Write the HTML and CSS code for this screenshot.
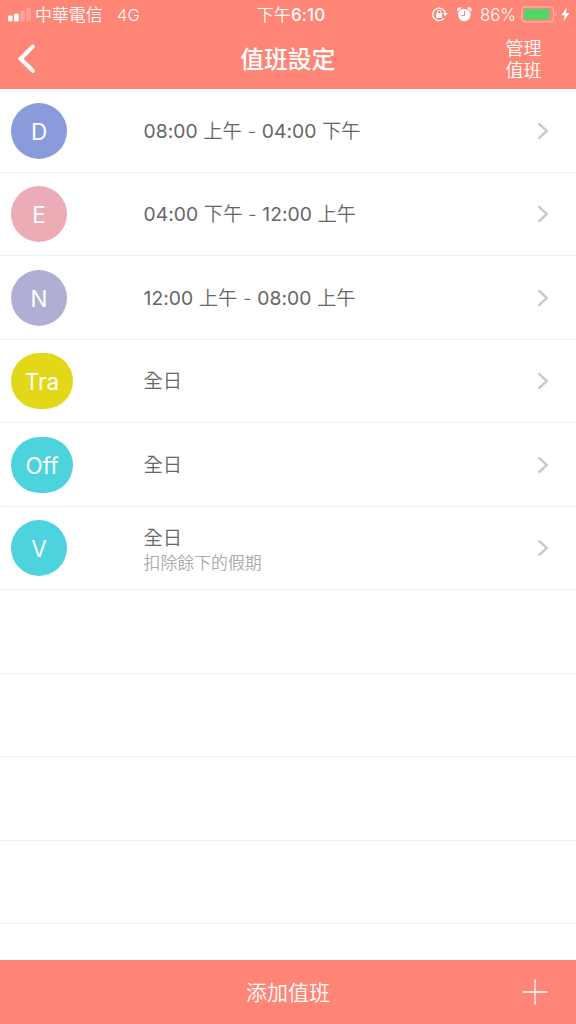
FILE: index.html
```html
<!DOCTYPE html>
<html lang="zh-Hant">
<head>
<meta charset="utf-8">
<title>值班設定</title>
<link rel="stylesheet" href="styles.css">
</head>
<body>
<div class="app">
  <header class="header">
    <div class="status">
      <div class="status-left">
        <svg class="signal" width="24" height="14" viewBox="0 0 24 14" fill="#fff"><rect x="0" y="7.5" width="4.6" height="6" rx="1.2"/><rect x="6.1" y="5.5" width="4.6" height="8" rx="1.2"/><rect x="12.2" y="2.7" width="4.6" height="10.8" rx="1.2" opacity=".25"/><rect x="18.2" y="0" width="4.6" height="13.5" rx="1.2" opacity=".25"/></svg>
        <span class="carrier">中華電信</span>
        <span class="network">4G</span>
      </div>
      <div class="clock">下午<b class="time">6:10</b></div>
      <div class="status-right">
        <svg class="lock" width="16" height="15" viewBox="0 0 16 15" fill="none" stroke="#fff"><path d="M12 11.3A6.3 6.3 0 1 1 13.3 6.6" stroke-width="1.3"/><path d="M10.6 5.9h5.2l-2.6 3.4z" fill="#fff" stroke="none"/><rect x="4.2" y="6.3" width="5.8" height="4.6" rx=".5" fill="#fff" stroke="none"/><path d="M5.4 6.5V5a1.7 1.7 0 0 1 3.4 0v1.5" stroke-width="1.1"/></svg>
        <svg class="alarm" width="15" height="15" viewBox="0 0 15 15" fill="#fff"><circle cx="7.3" cy="8" r="6.2"/><path d="M.6 4.7A2.7 2.7 0 0 1 4.5 1zM14 4.7A2.7 2.7 0 0 0 10.1 1z"/><path d="M7.5 4v4.5H4.4" fill="none" stroke="#ff8576" stroke-width="1"/></svg>
        <span class="percent">86%</span>
        <svg class="battery" width="37" height="17" viewBox="0 0 37 17"><rect x=".8" y=".8" width="31.7" height="15" rx="3.2" fill="none" stroke="#fff" stroke-opacity=".4" stroke-width="1.3"/><path d="M34.2 5.8a3 3 0 0 1 0 5z" fill="#fff" opacity=".4"/><rect x="3" y="3" width="25" height="10.6" rx="1" fill="#4cd964"/></svg>
        <svg class="bolt" width="9" height="15" viewBox="0 0 9 15"><path d="M5.8.5L.2 8.3h3.4L2.5 14.3 8.6 6H5z" fill="#fff"/></svg>
      </div>
    </div>
    <nav class="nav">
      <svg class="back" width="20" height="32" viewBox="0 0 20 32"><path d="M16.8 3.6L4.6 15.8l12.2 12" fill="none" stroke="#fff" stroke-width="4.1" stroke-linecap="round" stroke-linejoin="miter"/></svg>
      <h1 class="title">值班設定</h1>
      <div class="manage">管理<br>值班</div>
    </nav>
  </header>
  <main class="list">
    <div class="row"><span class="badge blue">D</span><div class="info"><p class="hours"><time>08:00</time> 上午 - <time>04:00</time> 下午</p></div><svg class="chevron" viewBox="0 0 12 18"><path d="M1.6 1.3L9.7 9l-8.1 7.7"/></svg></div>
    <div class="row"><span class="badge pink">E</span><div class="info"><p class="hours"><time>04:00</time> 下午 - <time>12:00</time> 上午</p></div><svg class="chevron" viewBox="0 0 12 18"><path d="M1.6 1.3L9.7 9l-8.1 7.7"/></svg></div>
    <div class="row"><span class="badge violet">N</span><div class="info"><p class="hours"><time>12:00</time> 上午 - <time>08:00</time> 上午</p></div><svg class="chevron" viewBox="0 0 12 18"><path d="M1.6 1.3L9.7 9l-8.1 7.7"/></svg></div>
    <div class="row"><span class="badge wide yellow">Tra</span><div class="info"><p class="hours">全日</p></div><svg class="chevron" viewBox="0 0 12 18"><path d="M1.6 1.3L9.7 9l-8.1 7.7"/></svg></div>
    <div class="row"><span class="badge wide cyan">Off</span><div class="info"><p class="hours">全日</p></div><svg class="chevron" viewBox="0 0 12 18"><path d="M1.6 1.3L9.7 9l-8.1 7.7"/></svg></div>
    <div class="row"><span class="badge cyan">V</span><div class="info double"><p class="hours">全日</p><p class="note">扣除餘下的假期</p></div><svg class="chevron" viewBox="0 0 12 18"><path d="M1.6 1.3L9.7 9l-8.1 7.7"/></svg></div>
    <div class="row"></div>
    <div class="row"></div>
    <div class="row"></div>
    <div class="row"></div>
  </main>
  <footer class="footer">
    <span class="add">添加值班</span>
    <svg class="plus" width="26" height="26" viewBox="0 0 26 26"><path d="M13 .5v25M.5 13h25" stroke="#fff" stroke-width="1.3"/></svg>
  </footer>
</div>
</body>
</html>
```
FILE: styles.css
```css
* { box-sizing: border-box; }
body {
  margin: 0;
  background: #fff;
  font-family: Inter, "Noto Sans CJK TC", sans-serif;
  color: #666;
}
p, h1 { margin: 0; }
svg { display: block; flex: none; }
.app {
  display: flex;
  flex-direction: column;
  width: 576px;
  height: 1024px;
  overflow: hidden;
}
.header {
  flex: none;
  height: 89px;
  background: #ff8576;
  color: #fff;
}
.status {
  display: grid;
  grid-template-columns: 1fr auto 1fr;
  align-items: center;
  height: 29px;
  padding: 0 6px 0 8px;
  font-size: 17px;
  line-height: 29px;
}
.status-left, .status-right { display: flex; align-items: center; }
.status-left > span, .clock, .percent { padding-top: 1px; }
.status-right { justify-content: flex-end; }
.signal { margin-right: 3px; }
.carrier { font-size: 16.9px; font-weight: 350; }
.network { margin-left: 14.5px; font-size: 16.5px; font-weight: 350; }
.clock { padding-left: 4px; font-weight: 350; letter-spacing: .1px; }
.time { font-weight: 500; }
.lock { margin-bottom: 2px; }
.alarm { margin: 0 0 2px 9px; }
.percent { margin-left: 8px; font-size: 16.7px; font-weight: 350; }
.battery { margin: 0 0 2px 5px; }
.bolt { margin: 0 0 1px 3px; }
.nav {
  display: grid;
  grid-template-columns: 1fr auto 1fr;
  align-items: center;
  height: 60px;
  padding: 0 34.5px 0 16px;
}
.title {
  padding: 2px 0 0 18px;
  font-size: 23.8px;
  font-weight: 500;
  line-height: 32px;
}
.manage {
  justify-self: end;
  padding-top: 1px;
  font-size: 18px;
  font-weight: 350;
  line-height: 21.5px;
}
.list { flex: 1; min-height: 0; padding-top: .6px; overflow: hidden; }
.row {
  display: flex;
  align-items: center;
  height: 83.45px;
  padding: 0 27.5px 0 11px;
  border-bottom: 1px solid #f0f0f0;
}
.badge {
  display: flex;
  align-items: center;
  justify-content: center;
  width: 56px;
  height: 56px;
  padding-top: 1px;
  margin-right: 76.5px;
  border-radius: 28px;
  color: #fff;
  font-size: 22.5px;
  font-weight: 400;
}
.wide { width: 62px; margin-right: 70.5px; }
.blue { background: #8a9bdb; }
.pink { background: #ebacb5; }
.violet { background: #b1aed5; }
.yellow { background: #e2d818; }
.cyan { background: #4dd3de; }
.info { flex: 1; }
.double { padding-top: 3px; }
.hours { font-size: 19.3px; font-weight: 350; line-height: 26px; letter-spacing: .06px; }
.hours time { font-weight: 400; }
.note { font-size: 16.9px; line-height: 24px; font-weight: 350; color: #aaa; }
.chevron {
  width: 12px;
  height: 18px;
  fill: none;
  stroke: #c7c7cc;
  stroke-width: 2.4;
}
.footer {
  display: grid;
  grid-template-columns: 1fr auto 1fr;
  align-items: center;
  flex: none;
  height: 64px;
  padding: 0 28.5px;
  background: #ff8576;
  color: #fff;
}
.add { grid-column: 2; padding-top: 1px; font-size: 21px; font-weight: 350; line-height: 30px; }
.plus { justify-self: end; }
```
